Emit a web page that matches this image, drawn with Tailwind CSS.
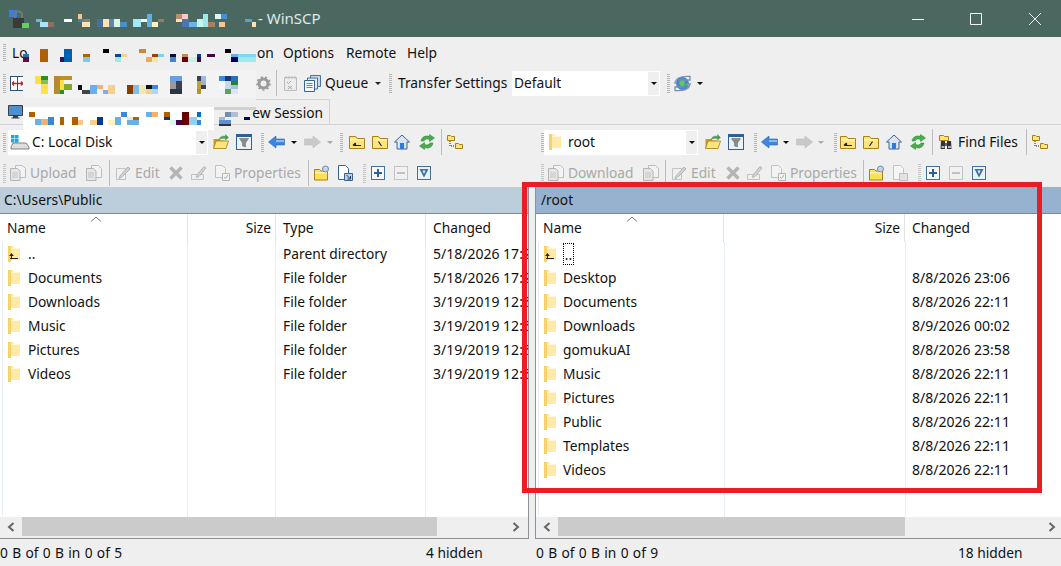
<!DOCTYPE html>
<html lang="en">
<head>
  <meta charset="UTF-8" />
  <title>WinSCP</title>
  <script src="https://cdn.jsdelivr.net/npm/@tailwindcss/browser@4"></script>
</head>
<body class="relative w-[1061px] h-[566px] overflow-hidden bg-[#efefef] text-[#111] text-[13.75px] leading-none font-['Noto_Sans',sans-serif]">

  <!-- shared icons -->
  <svg class="hidden">
    <symbol id="list-folder" viewBox="0 0 12 16">
      <path d="M0 0h5l1 2h6v12H3l-3 2z" fill="#ffeaa8"/>
      <path d="M0 0h3v16H0z" fill="#f7d169"/>
      <path d="M3 2h9v1H3z" fill="#fff6d2"/>
    </symbol>
    <symbol id="up-arrow" viewBox="0 0 12 16">
      <path d="M2 12.500h8M3.500 12.500V9.500" fill="none" stroke="#222"/>
      <path d="M1.200 10L3.500 7 5.800 10z" fill="#222"/>
    </symbol>
    <symbol id="tb-folder" viewBox="0 0 16 16">
      <path d="M.5 2.500h6l1.500 2h7.500v10H.5z" fill="#fde57a" stroke="#a97f1c"/>
      <path d="M1 5h14v1.500H1z" fill="#fff6c0"/>
    </symbol>
    <symbol id="tb-back" viewBox="0 0 17 16">
      <path d="M.5 8L8 2V5h8.500v6H8v3z" fill="#3f87dc" stroke="#2a66b5" stroke-width=".6"/>
      <path d="M8 6h8v2H8z" fill="#8cbcf0"/>
    </symbol>
    <symbol id="tb-forward" viewBox="0 0 17 16">
      <path d="M16.500 8L9 2V5H.5v6H9v3z" fill="#c9c9c9" stroke="#bdbdbd" stroke-width=".6"/>
    </symbol>
    <symbol id="tb-filter" viewBox="0 0 16 16">
      <rect x=".5" y=".5" width="15" height="15" fill="#eaf2fa" stroke="#2f5f97"/>
      <path d="M0 1h16v2H0z" fill="#2f5f97"/>
      <path d="M3.500 4.500h9L9.500 9v4l-3-1V9z" fill="#8a8a8a" stroke="#666" stroke-width=".5"/>
    </symbol>
    <symbol id="tb-open" viewBox="0 0 16 16">
      <path d="M.5 14.500V5h6l1 1.500H12v8z" fill="#c79a24"/>
      <path d="M.5 14.500L3 7h12.500L13 14.500z" fill="#fde57a" stroke="#a97f1c" stroke-width=".8"/>
      <path d="M6 5.500C7 2.500 10 1.500 12.500 2.500V.5l3 3-3 2.500V4.500C10 4 8 4.500 6 5.500z" fill="#3fa648" stroke="#2c7d34" stroke-width=".4"/>
    </symbol>
    <symbol id="tb-home" viewBox="0 0 16 16">
      <path d="M8 1L.5 8H3v7h10V8h2.500z" fill="#d8e4f2" stroke="#3b6796"/>
      <path d="M6 9h4v6H6z" fill="#2f7ad6"/>
    </symbol>
    <symbol id="tb-refresh" viewBox="0 0 16 16">
      <path d="M2 7C2.500 3 6.500 1 10.500 2.500V.5L15.500 4 10.500 7.500V5.500C8 4.500 6 5 5 7z" fill="#45b04a" stroke="#2c7d34" stroke-width=".5"/>
      <path d="M14 9C13.500 13 9.500 15 5.500 13.500v2L.5 12 5.500 8.500v2C8 11.500 10 11 11 9z" fill="#45b04a" stroke="#2c7d34" stroke-width=".5"/>
    </symbol>
    <symbol id="tb-tree" viewBox="0 0 16 16">
      <path d="M.5 1.500h3l1 1h3v4h-7zM8.500 9.500h3l1 1h3v4h-7z" fill="#fde57a" stroke="#a97f1c"/>
      <path d="M3 7v5h5" fill="none" stroke="#222" stroke-dasharray="1 1"/>
    </symbol>
    <symbol id="tb-copy-off" viewBox="0 0 16 16">
      <path d="M5.500 .5h7l3 3v9h-10z" fill="#f3f3f3" stroke="#bdbdbd"/>
      <path d="M.5 3.500h7L10 6v9.500H.5z" fill="#e6e6e6" stroke="#b5b5b5"/>
      <path d="M2 8h6M2 10h6M2 12h6" stroke="#c4c4c4"/>
    </symbol>
    <symbol id="tb-edit-off" viewBox="0 0 16 16">
      <path d="M1.500 3.500h9v11h-9z" fill="#f0f0f0" stroke="#c2c2c2"/>
      <path d="M5 11l-1 2.500L6.500 12.500 15 4 13 2z" fill="#d2d2d2" stroke="#b5b5b5"/>
    </symbol>
    <symbol id="tb-x-off" viewBox="0 0 16 16">
      <path d="M2.500 2.500l11 11M13.500 2.500l-11 11" stroke="#b4b4b4" stroke-width="3.400"/>
    </symbol>
    <symbol id="tb-rename-off" viewBox="0 0 16 16">
      <path d="M.5 9.500h12v5H.5z" fill="#f0f0f0" stroke="#c2c2c2"/>
      <path d="M6 10l-.5 2.500L8 11.500 15 3 13 1.500z" fill="#d2d2d2" stroke="#b5b5b5"/>
    </symbol>
    <symbol id="tb-props-off" viewBox="0 0 16 16">
      <path d="M1.500 .5h7l3 3v9h-10z" fill="#f3f3f3" stroke="#c2c2c2"/>
      <path d="M8.500 8.500h7v7h-7z" fill="#f3f3f3" stroke="#b5b5b5"/>
      <path d="M10 12l1.500 1.500L14 10" fill="none" stroke="#aaa"/>
    </symbol>
    <symbol id="tb-newfolder" viewBox="0 0 16 16">
      <path d="M.5 4.500h5l1.500 1.500h6.500v9H.5z" fill="#fde14f" stroke="#a97f1c"/>
      <path d="M1 7h12v1.500H1z" fill="#fff6c0"/>
      <circle cx="11.500" cy="4" r="3" fill="#c6d4e6" stroke="#6f8bad"/>
    </symbol>
    <symbol id="tb-dup" viewBox="0 0 16 16">
      <path d="M1.500 .5h7l3 3v11h-10z" fill="#fff" stroke="#38618f"/>
      <path d="M7.500 8.500h8v7h-8z" fill="#bcd0e6" stroke="#38618f"/>
      <path d="M9.500 10l4 4M13.500 11v3h-3" fill="none" stroke="#1d3d63"/>
    </symbol>
    <symbol id="tb-dup-off" viewBox="0 0 16 16">
      <path d="M1.500 .5h7l3 3v11h-10z" fill="#f5f5f5" stroke="#c2c2c2"/>
      <path d="M7.500 8.500h8v7h-8z" fill="#e2e2e2" stroke="#bdbdbd"/>
    </symbol>
    <symbol id="tb-plus" viewBox="0 0 14 14">
      <rect x=".5" y=".5" width="13" height="13" fill="#f7f7f7" stroke="#44709f"/>
      <path d="M3 7h8M7 3v8" stroke="#2f5f97" stroke-width="2"/>
    </symbol>
    <symbol id="tb-minus" viewBox="0 0 14 14">
      <rect x=".5" y=".5" width="13" height="13" fill="#f1f1f1" stroke="#c4c4c4"/>
      <path d="M3 7h8" stroke="#c0c0c0" stroke-width="2"/>
    </symbol>
    <symbol id="tb-select" viewBox="0 0 14 14">
      <rect x=".5" y=".5" width="13" height="13" fill="#eaf2fa" stroke="#44709f"/>
      <path d="M2.500 3h9L7 11.500z" fill="#44709f"/>
      <path d="M5.500 4.500h3L7 8z" fill="#eaf2fa"/>
    </symbol>
  </svg>

  <!-- title bar -->
  <header class="flex items-center h-[37px] bg-[#4a685f]">
    <svg class="ml-[8px] w-[21px] h-[20px]" viewBox="0 0 21 20">
      <path d="M1 1h8v7H1z" fill="#3b7fd0"/>
      <path d="M7 9V6a3.500 3.500 0 0 1 7 0v3" fill="none" stroke="#777" stroke-width="2"/>
      <path d="M5 9h11v10H5z" fill="#3a3a3a"/>
      <path d="M14 14h7v5h-7z" fill="#5fd15f"/>
    </svg>
    <span class="ml-[229px] pb-px text-[15px] text-[#dfe9ec]">- WinSCP</span>
    <svg class="ml-auto mr-[19px] w-[130px] h-[14px]" viewBox="0 0 130 14" fill="none" stroke="#f4f6f6">
      <path d="M0 7.500h12"/>
      <path d="M58.500 1.500h11v11h-11z"/>
      <path d="M117 1l12 12M129 1l-12 12"/>
    </svg>
  </header>

  <!-- menu bar -->
  <nav class="flex items-center h-[31px]">
    <div class="ml-[3px] w-[3px] h-[17px] bg-[repeating-linear-gradient(to_bottom,#b5b5b5_0_1px,transparent_1px_2px)]"></div>
    <span class="ml-[6px] w-[245px]">Lo</span>
    <span class="w-[26px]">on</span>
    <span class="w-[63px]">Options</span>
    <span class="w-[61px]">Remote</span>
    <span>Help</span>
  </nav>

  <!-- main toolbar -->
  <div class="flex items-center h-[30px]">
    <div class="ml-[3px] w-[3px] h-[19px] bg-[repeating-linear-gradient(to_bottom,#b5b5b5_0_1px,transparent_1px_2px)]"></div>
    <svg class="ml-[4px] w-[15px] h-[15px]" viewBox="0 0 15 15">
      <rect x=".5" y=".5" width="14" height="14" fill="#fff" stroke="#2b4f7f"/>
      <path d="M7.500 1v13" stroke="#2b4f7f"/>
      <path d="M2 7.500h11M2 7.500l2-2M2 7.500l2 2M13 7.500l-2-2M13 7.500l-2 2" fill="none" stroke="#c0262d" stroke-width="1.300"/>
    </svg>
    <svg class="ml-[231px] w-[15px] h-[15px]" viewBox="0 0 15 15">
      <circle cx="7.500" cy="7.500" r="4.500" fill="none" stroke="#9a9a9a" stroke-width="3"/>
      <circle cx="7.500" cy="7.500" r="6.500" fill="none" stroke="#9a9a9a" stroke-width="1.600" stroke-dasharray="2 2.500"/>
    </svg>
    <div class="ml-[5px] w-px h-[26px] bg-[#bdbdbd]"></div>
    <svg class="ml-[6px] w-[15px] h-[16px]" viewBox="0 0 15 16">
      <path d="M1.500 2.500h12v13h-12z" fill="#ececec" stroke="#bcbcbc"/>
      <path d="M3 1v3M6 1v3M9 1v3M12 1v3" stroke="#bcbcbc"/>
      <path d="M4 7l1.500 1.500L8 6M5 11l4 3M9 11l-4 3" fill="none" stroke="#aaa"/>
    </svg>
    <svg class="ml-[6px] w-[17px] h-[17px]" viewBox="0 0 17 17">
      <path d="M6.500 .5h10v11h-10z" fill="#c8d8ea" stroke="#4d7299"/>
      <path d="M3.500 3h10v11h-10z" fill="#dfe9f4" stroke="#4d7299"/>
      <path d="M.5 5.500h10v11H.5z" fill="#f6f9fc" stroke="#3b6390"/>
      <path d="M2.500 8.500h6M2.500 10.500h6M2.500 12.500h6" stroke="#5c84ad"/>
    </svg>
    <span class="ml-[4px] w-[46px]">Queue</span>
    <span class="ml-[4px] w-0 h-0 border-x-[3px] border-x-transparent border-t-[3px] border-t-[#222]"></span>
    <div class="ml-[8px] w-[3px] h-[19px] bg-[repeating-linear-gradient(to_bottom,#b5b5b5_0_1px,transparent_1px_2px)]"></div>
    <span class="ml-[6px] w-[114px] whitespace-nowrap">Transfer Settings</span>
    <div class="flex items-center w-[148px] h-[25px] bg-white pl-[2px] pr-px">
      <span class="flex-1">Default</span>
      <span class="flex items-center justify-center w-[11px] h-[23px] bg-[#efefef]"><span class="w-0 h-0 border-x-[3px] border-x-transparent border-t-[3px] border-t-[#111]"></span></span>
    </div>
    <div class="ml-[7px] w-[3px] h-[19px] bg-[repeating-linear-gradient(to_bottom,#b5b5b5_0_1px,transparent_1px_2px)]"></div>
    <svg class="ml-[4px] w-[17px] h-[17px]" viewBox="0 0 17 17">
      <circle cx="8.500" cy="8.500" r="6.500" fill="#3f86d8"/>
      <path d="M6 4l4 1 1 4-3 3-3-3zM12 9l2-1-1 4z" fill="#5fc85f"/>
      <path d="M1 9V7.500C2 3 7 1 16 1.500v3.500H6.500L5 7M16 8v1.500C15 14 10 16 1 15.500V12h9.500L12 10" fill="none" stroke="#7c8ea3" stroke-width="1.300"/>
    </svg>
    <span class="ml-[6px] w-0 h-0 border-x-[3px] border-x-transparent border-t-[3px] border-t-[#111]"></span>
  </div>

  <!-- session tabs -->
  <div class="flex items-end h-[27px] border-b border-[#d2d2d2]">
    <svg class="ml-[8px] mb-[5px] w-[15px] h-[15px]" viewBox="0 0 15 15">
      <path d="M.5 1.500h14v10H.5z" fill="#4f8fd0" stroke="#3a3f47"/>
      <path d="M5 12h5v1.500H5zM3.500 13.500h8v1h-8z" fill="#3a3f47"/>
    </svg>
    <div class="flex items-center justify-end ml-[192px] w-[115px] h-[25px] pt-[2px] pr-[6px] border-t border-r border-[#d2d2d2]">ew Session</div>
  </div>

  <!-- the two file panels -->
  <main class="flex h-[441px]">
    <section class="flex flex-col w-[535px]">
      <div class="flex items-center h-[34px]">
        <div class="ml-[3px] w-[3px] h-[19px] bg-[repeating-linear-gradient(to_bottom,#b5b5b5_0_1px,transparent_1px_2px)]"></div>
        <div class="flex items-center ml-[2px] w-[200px] h-[25px] bg-white pr-px">
          <svg class="ml-[2px] w-[20px] h-[15px]" viewBox="0 0 20 15">
            <path d="M1 0h3.500v3.500H1zM5 0h3.500v3.500H5zM1 4h3.500v3.500H1zM5 4h3.500v3.500H5z" fill="#19a8e8"/>
            <path d="M1 12l2-4h13l3 4v2H1z" fill="#dedede" stroke="#555" stroke-width=".7"/>
          </svg>
          <span class="ml-[2px] flex-1">C: Local Disk</span>
          <span class="flex items-center justify-center w-[11px] h-[23px] bg-[#efefef]"><span class="w-0 h-0 border-x-[3px] border-x-transparent border-t-[3px] border-t-[#111]"></span></span>
        </div>
        <svg class="ml-[5px] w-4 h-4"><use href="#tb-open"/></svg>
        <svg class="ml-[7px] w-4 h-4"><use href="#tb-filter"/></svg>
        <div class="ml-[9px] w-[3px] h-[19px] bg-[repeating-linear-gradient(to_bottom,#b5b5b5_0_1px,transparent_1px_2px)]"></div>
        <svg class="ml-[4px] w-[17px] h-4"><use href="#tb-back"/></svg>
        <span class="ml-[6px] w-0 h-0 border-x-[3px] border-x-transparent border-t-[3px] border-t-[#111]"></span>
        <svg class="ml-[7px] w-[17px] h-4"><use href="#tb-forward"/></svg>
        <span class="ml-[6px] w-0 h-0 border-x-[3px] border-x-transparent border-t-[3px] border-t-[#aaa]"></span>
        <div class="ml-[7px] w-[3px] h-[19px] bg-[repeating-linear-gradient(to_bottom,#b5b5b5_0_1px,transparent_1px_2px)]"></div>
        <svg class="ml-[6px] w-4 h-4" viewBox="0 0 16 16"><use href="#tb-folder"/><path d="M4 11.500h8M4 11.500L6.500 9M6.500 9v2.500" fill="none" stroke="#222" stroke-width="1.200"/></svg>
        <svg class="ml-[7px] w-4 h-4" viewBox="0 0 16 16"><use href="#tb-folder"/><path d="M6.500 7.500L9.500 12" stroke="#222" stroke-width="1.200"/></svg>
        <svg class="ml-[6px] w-4 h-4"><use href="#tb-home"/></svg>
        <svg class="ml-[9px] w-4 h-4"><use href="#tb-refresh"/></svg>
        <div class="ml-[6px] w-px h-[26px] bg-[#bdbdbd]"></div>
        <svg class="ml-[5px] w-4 h-4"><use href="#tb-tree"/></svg>
      </div>
      <div class="flex items-center h-[28px] text-[#a9a9a9]">
        <div class="ml-[3px] w-[3px] h-[19px] bg-[repeating-linear-gradient(to_bottom,#c5c5c5_0_1px,transparent_1px_2px)]"></div>
        <svg class="ml-[4px] w-4 h-4"><use href="#tb-copy-off"/></svg>
        <span class="ml-[4px] w-[52px]">Upload</span>
        <svg class="ml-[4px] w-4 h-4"><use href="#tb-copy-off"/></svg>
        <div class="ml-[7px] w-px h-[26px] bg-[#bdbdbd]"></div>
        <svg class="ml-[5px] w-4 h-4"><use href="#tb-edit-off"/></svg>
        <span class="ml-[4px] w-[29px]">Edit</span>
        <svg class="ml-[4px] w-4 h-4"><use href="#tb-x-off"/></svg>
        <svg class="ml-[7px] w-4 h-4"><use href="#tb-rename-off"/></svg>
        <svg class="ml-[7px] w-4 h-4"><use href="#tb-props-off"/></svg>
        <span class="ml-[4px] w-[70px]">Properties</span>
        <div class="ml-[4px] w-px h-[26px] bg-[#bdbdbd]"></div>
        <svg class="ml-[5px] w-4 h-4"><use href="#tb-newfolder"/></svg>
        <svg class="ml-[7px] w-4 h-4"><use href="#tb-dup"/></svg>
        <div class="ml-[10px] w-[3px] h-[19px] bg-[repeating-linear-gradient(to_bottom,#c5c5c5_0_1px,transparent_1px_2px)]"></div>
        <svg class="ml-[5px] w-[14px] h-[14px]"><use href="#tb-plus"/></svg>
        <svg class="ml-[9px] w-[14px] h-[14px]"><use href="#tb-minus"/></svg>
        <svg class="ml-[9px] w-[14px] h-[14px]"><use href="#tb-select"/></svg>
      </div>

      <div class="flex flex-col w-[529px] flex-1 border-r border-b border-[#8e9297] bg-white">
        <div class="flex items-center h-[27px] pl-[4px] bg-[#bccddc] border-b border-[#808890]">C:\Users\Public</div>
        <div class="relative grid grid-cols-[188px_88px_150px_102px] h-[28px] items-center bg-white">
          <span class="pl-[7px] h-full flex items-center border-r border-[#e4e4e4]">Name</span>
          <span class="pr-[4px] h-full flex items-center justify-end border-r border-[#e4e4e4]">Size</span>
          <span class="pl-[7px] h-full flex items-center border-r border-[#e4e4e4]">Type</span>
          <span class="pl-[7px] h-full flex items-center">Changed</span>
          <svg class="absolute left-[90px] top-[2px] w-[12px] h-[6px]" viewBox="0 0 12 6" fill="none" stroke="#777"><path d="M1 5.500L6 1l5 4.500"/></svg>
        </div>
        <div class="flex-1 overflow-hidden bg-[linear-gradient(#e6eff9,#e6eff9),linear-gradient(#e6eff9,#e6eff9),linear-gradient(#e6eff9,#e6eff9),linear-gradient(#e6eff9,#e6eff9)] bg-[length:1px_100%] bg-[position:2px_0,187px_0,275px_0,425px_0] bg-no-repeat">
          <div class="grid grid-cols-[28px_160px_88px_150px_102px] grid-rows-[repeat(6,24px)] items-center whitespace-nowrap">
            <svg class="ml-[8px] w-3 h-4" viewBox="0 0 12 16"><use href="#list-folder"/><use href="#up-arrow"/></svg><span>..</span><span></span><span class="pl-[7px]">Parent directory</span><span class="pl-[7px] text-[14px] overflow-hidden">5/18/2026 17:23</span>
            <svg class="ml-[8px] w-3 h-4"><use href="#list-folder"/></svg><span>Documents</span><span></span><span class="pl-[7px]">File folder</span><span class="pl-[7px] text-[14px] overflow-hidden">5/18/2026 17:23</span>
            <svg class="ml-[8px] w-3 h-4"><use href="#list-folder"/></svg><span>Downloads</span><span></span><span class="pl-[7px]">File folder</span><span class="pl-[7px] text-[14px] overflow-hidden">3/19/2019 12:52</span>
            <svg class="ml-[8px] w-3 h-4"><use href="#list-folder"/></svg><span>Music</span><span></span><span class="pl-[7px]">File folder</span><span class="pl-[7px] text-[14px] overflow-hidden">3/19/2019 12:52</span>
            <svg class="ml-[8px] w-3 h-4"><use href="#list-folder"/></svg><span>Pictures</span><span></span><span class="pl-[7px]">File folder</span><span class="pl-[7px] text-[14px] overflow-hidden">3/19/2019 12:52</span>
            <svg class="ml-[8px] w-3 h-4"><use href="#list-folder"/></svg><span>Videos</span><span></span><span class="pl-[7px]">File folder</span><span class="pl-[7px] text-[14px] overflow-hidden">3/19/2019 12:52</span>
          </div>
        </div>
        <div class="flex items-start h-[21px] bg-[#efefef]">
          <svg class="ml-[7px] mt-[5px] w-[8px] h-[10px]" viewBox="0 0 8 10" fill="none" stroke="#666" stroke-width="2"><path d="M6.500 1L2 5l4.500 4"/></svg>
          <div class="ml-[7px] w-[415px] h-[19px] bg-[#cbcbcb]"></div>
          <svg class="ml-[75px] mt-[5px] w-[8px] h-[10px]" viewBox="0 0 8 10" fill="none" stroke="#666" stroke-width="2"><path d="M1.500 1L6 5 1.500 9"/></svg>
        </div>
      </div>
      <div class="flex items-center h-[27px] pt-px">
        <span class="w-[426px] [word-spacing:0.75px]">0 B of 0 B in 0 of 5</span>
        <span>4 hidden</span>
      </div>
    </section>

    <section class="flex flex-col flex-1">
      <div class="flex items-center h-[34px]">
        <div class="ml-[6px] w-[3px] h-[19px] bg-[repeating-linear-gradient(to_bottom,#b5b5b5_0_1px,transparent_1px_2px)]"></div>
        <div class="flex items-center w-[154px] h-[25px] bg-white pr-px">
          <svg class="ml-[5px] w-3 h-4"><use href="#list-folder"/></svg>
          <span class="ml-[7px] flex-1">root</span>
          <span class="flex items-center justify-center w-[11px] h-[23px] bg-[#efefef]"><span class="w-0 h-0 border-x-[3px] border-x-transparent border-t-[3px] border-t-[#111]"></span></span>
        </div>
        <svg class="ml-[7px] w-4 h-4"><use href="#tb-open"/></svg>
        <svg class="ml-[7px] w-4 h-4"><use href="#tb-filter"/></svg>
        <div class="ml-[10px] w-[3px] h-[19px] bg-[repeating-linear-gradient(to_bottom,#b5b5b5_0_1px,transparent_1px_2px)]"></div>
        <svg class="ml-[4px] w-[17px] h-4"><use href="#tb-back"/></svg>
        <span class="ml-[5px] w-0 h-0 border-x-[3px] border-x-transparent border-t-[3px] border-t-[#111]"></span>
        <svg class="ml-[7px] w-[17px] h-4"><use href="#tb-forward"/></svg>
        <span class="ml-[5px] w-0 h-0 border-x-[3px] border-x-transparent border-t-[3px] border-t-[#aaa]"></span>
        <div class="ml-[10px] w-[3px] h-[19px] bg-[repeating-linear-gradient(to_bottom,#b5b5b5_0_1px,transparent_1px_2px)]"></div>
        <svg class="ml-[3px] w-4 h-4" viewBox="0 0 16 16"><use href="#tb-folder"/><path d="M4 11.500h8M4 11.500L6.500 9M6.500 9v2.500" fill="none" stroke="#222" stroke-width="1.200"/></svg>
        <svg class="ml-[7px] w-4 h-4" viewBox="0 0 16 16"><use href="#tb-folder"/><path d="M9.500 7.500L6.500 12" stroke="#222" stroke-width="1.200"/></svg>
        <svg class="ml-[7px] w-4 h-4"><use href="#tb-home"/></svg>
        <svg class="ml-[8px] w-4 h-4"><use href="#tb-refresh"/></svg>
        <div class="ml-[6px] w-px h-[26px] bg-[#bdbdbd]"></div>
        <svg class="ml-[5px] w-4 h-4" viewBox="0 0 16 16">
          <path d="M1.500 1.500h4l1 1h4v4h-9z" fill="#fde57a" stroke="#a97f1c"/>
          <path d="M3 7h4v8H2.500zM9 7h4l.5 8H9z" fill="#333"/>
          <path d="M7 9h2v3H7z" fill="#666"/>
          <path d="M3.500 12h3v2h-3zM10 12h3v2h-3z" fill="#aab4c0"/>
        </svg>
        <span class="ml-[4px] w-[64px] whitespace-nowrap">Find Files</span>
        <div class="ml-[4px] w-px h-[26px] bg-[#bdbdbd]"></div>
        <svg class="ml-[5px] w-4 h-4"><use href="#tb-tree"/></svg>
      </div>
      <div class="flex items-center h-[28px] text-[#a9a9a9]">
        <div class="ml-[6px] w-[3px] h-[19px] bg-[repeating-linear-gradient(to_bottom,#c5c5c5_0_1px,transparent_1px_2px)]"></div>
        <svg class="ml-[4px] w-4 h-4"><use href="#tb-copy-off"/></svg>
        <span class="ml-[4px] w-[71px]">Download</span>
        <svg class="ml-[4px] w-4 h-4"><use href="#tb-copy-off"/></svg>
        <div class="ml-[6px] w-px h-[26px] bg-[#bdbdbd]"></div>
        <svg class="ml-[5px] w-4 h-4"><use href="#tb-edit-off"/></svg>
        <span class="ml-[4px] w-[29px]">Edit</span>
        <svg class="ml-[5px] w-4 h-4"><use href="#tb-x-off"/></svg>
        <svg class="ml-[6px] w-4 h-4"><use href="#tb-rename-off"/></svg>
        <svg class="ml-[7px] w-4 h-4"><use href="#tb-props-off"/></svg>
        <span class="ml-[4px] w-[70px]">Properties</span>
        <div class="ml-[3px] w-px h-[26px] bg-[#bdbdbd]"></div>
        <svg class="ml-[5px] w-4 h-4"><use href="#tb-newfolder"/></svg>
        <svg class="ml-[7px] w-4 h-4"><use href="#tb-dup-off"/></svg>
        <div class="ml-[10px] w-[3px] h-[19px] bg-[repeating-linear-gradient(to_bottom,#c5c5c5_0_1px,transparent_1px_2px)]"></div>
        <svg class="ml-[5px] w-[14px] h-[14px]"><use href="#tb-plus"/></svg>
        <svg class="ml-[9px] w-[14px] h-[14px]"><use href="#tb-minus"/></svg>
        <svg class="ml-[9px] w-[14px] h-[14px]"><use href="#tb-select"/></svg>
      </div>

      <div class="flex flex-col flex-1 border-l border-b border-[#8e9297] bg-white">
        <div class="flex items-center h-[27px] pl-[5px] bg-[#97b2cf] border-b border-[#808890]">/root</div>
        <div class="relative grid grid-cols-[188px_181px_1fr] h-[28px] items-center bg-white">
          <span class="pl-[7px] h-full flex items-center border-r border-[#e4e4e4]">Name</span>
          <span class="pr-[4px] h-full flex items-center justify-end border-r border-[#e4e4e4]">Size</span>
          <span class="pl-[7px] h-full flex items-center">Changed</span>
          <svg class="absolute left-[90px] top-[2px] w-[12px] h-[6px]" viewBox="0 0 12 6" fill="none" stroke="#777"><path d="M1 5.500L6 1l5 4.500"/></svg>
        </div>
        <div class="flex-1 overflow-hidden bg-[linear-gradient(#e6eff9,#e6eff9),linear-gradient(#e6eff9,#e6eff9),linear-gradient(#e6eff9,#e6eff9)] bg-[length:1px_100%] bg-[position:2px_0,188px_0,369px_0] bg-no-repeat">
          <div class="grid grid-cols-[27px_161px_181px_1fr] grid-rows-[repeat(10,24px)] items-center whitespace-nowrap">
            <svg class="ml-[8px] w-3 h-4" viewBox="0 0 12 16"><use href="#list-folder"/><use href="#up-arrow"/></svg><span class="w-[11px] h-[22px] pb-[2px] flex items-end justify-center border border-dotted border-black">..</span><span></span><span></span>
            <svg class="ml-[8px] w-3 h-4"><use href="#list-folder"/></svg><span>Desktop</span><span></span><span class="pl-[7px] text-[14px]">8/8/2026 23:06</span>
            <svg class="ml-[8px] w-3 h-4"><use href="#list-folder"/></svg><span>Documents</span><span></span><span class="pl-[7px] text-[14px]">8/8/2026 22:11</span>
            <svg class="ml-[8px] w-3 h-4"><use href="#list-folder"/></svg><span>Downloads</span><span></span><span class="pl-[7px] text-[14px]">8/9/2026 00:02</span>
            <svg class="ml-[8px] w-3 h-4"><use href="#list-folder"/></svg><span>gomukuAI</span><span></span><span class="pl-[7px] text-[14px]">8/8/2026 23:58</span>
            <svg class="ml-[8px] w-3 h-4"><use href="#list-folder"/></svg><span>Music</span><span></span><span class="pl-[7px] text-[14px]">8/8/2026 22:11</span>
            <svg class="ml-[8px] w-3 h-4"><use href="#list-folder"/></svg><span>Pictures</span><span></span><span class="pl-[7px] text-[14px]">8/8/2026 22:11</span>
            <svg class="ml-[8px] w-3 h-4"><use href="#list-folder"/></svg><span>Public</span><span></span><span class="pl-[7px] text-[14px]">8/8/2026 22:11</span>
            <svg class="ml-[8px] w-3 h-4"><use href="#list-folder"/></svg><span>Templates</span><span></span><span class="pl-[7px] text-[14px]">8/8/2026 22:11</span>
            <svg class="ml-[8px] w-3 h-4"><use href="#list-folder"/></svg><span>Videos</span><span></span><span class="pl-[7px] text-[14px]">8/8/2026 22:11</span>
          </div>
        </div>
        <div class="flex items-start h-[21px] bg-[#efefef]">
          <svg class="ml-[7px] mt-[5px] w-[8px] h-[10px]" viewBox="0 0 8 10" fill="none" stroke="#666" stroke-width="2"><path d="M6.500 1L2 5l4.500 4"/></svg>
          <div class="ml-[7px] w-[347px] h-[19px] bg-[#cbcbcb]"></div>
          <svg class="ml-[143px] mt-[5px] w-[8px] h-[10px]" viewBox="0 0 8 10" fill="none" stroke="#666" stroke-width="2"><path d="M1.500 1L6 5 1.500 9"/></svg>
        </div>
      </div>
      <div class="flex items-center h-[27px] pt-px">
        <span class="ml-px w-[422px] [word-spacing:0.75px]">0 B of 0 B in 0 of 9</span>
        <span>18 hidden</span>
      </div>
    </section>
  </main>

  <!-- pixelated patches over the title, menu, toolbar and tab -->
  <svg class="absolute left-0 top-0 w-[1061px] h-[140px] pointer-events-none" viewBox="0 0 1061 140" shape-rendering="crispEdges">
    <g>
      <rect x="36" y="19" width="6" height="3" fill="#6eb5e0"/><rect x="40" y="22" width="8" height="5" fill="#a8e4f5"/><rect x="48" y="22" width="6" height="5" fill="#8f6f62"/>
      <rect x="64" y="19" width="8" height="3" fill="#fff"/>
      <rect x="78" y="14" width="4" height="5" fill="#f0c890"/><rect x="78" y="19" width="5" height="3" fill="#4a7fb0"/><rect x="83" y="19" width="7" height="3" fill="#a07a60"/><rect x="82" y="22" width="8" height="5" fill="#fde3b8"/>
      <rect x="97" y="19" width="6" height="8" fill="#4a6f9f"/><rect x="103" y="19" width="6" height="8" fill="#fde3b0"/><rect x="109" y="19" width="5" height="8" fill="#5f86ad"/><rect x="114" y="19" width="6" height="8" fill="#d8f5e5"/><rect x="120" y="22" width="7" height="5" fill="#4a90c8"/>
      <rect x="133" y="19" width="8" height="8" fill="#a0e8f5"/><rect x="141" y="19" width="6" height="3" fill="#fff"/><rect x="147" y="14" width="5" height="13" fill="#60b0e0"/><rect x="152" y="22" width="6" height="5" fill="#fdf3c0"/><rect x="158" y="19" width="6" height="3" fill="#9a7a60"/>
      <rect x="176" y="14" width="6" height="5" fill="#b89070"/><rect x="182" y="14" width="6" height="5" fill="#fcc8c8"/><rect x="176" y="19" width="6" height="3" fill="#fde3b0"/><rect x="182" y="19" width="7" height="8" fill="#4a76ad"/><rect x="189" y="22" width="8" height="5" fill="#68b6e6"/>
      <rect x="197" y="19" width="6" height="8" fill="#c4f5ee"/><rect x="203" y="14" width="5" height="13" fill="#9ae8f0"/><rect x="208" y="22" width="7" height="5" fill="#a88060"/><rect x="215" y="14" width="6" height="5" fill="#d8f5f0"/><rect x="221" y="14" width="6" height="5" fill="#4a90d0"/><rect x="219" y="22" width="6" height="5" fill="#f5c890"/>
      <rect x="245" y="19" width="7" height="3" fill="#5f9fd0"/><rect x="252" y="22" width="4" height="5" fill="#fde3b0"/>
    </g>
    <g>
      <rect x="23" y="54" width="6" height="3" fill="#2a6ea8"/><rect x="23" y="57" width="6" height="5" fill="#5a0f3c"/>
      <rect x="40" y="49" width="8" height="13" fill="#b06000"/>
      <rect x="60" y="57" width="4" height="5" fill="#3a1060"/><rect x="64" y="49" width="8" height="13" fill="#0060b0"/>
      <rect x="83" y="54" width="7" height="3" fill="#b06000"/><rect x="83" y="57" width="7" height="5" fill="#80c8e8"/>
      <rect x="103" y="49" width="6" height="4" fill="#000"/>
      <rect x="115" y="54" width="6" height="3" fill="#0a4a90"/><rect x="115" y="57" width="6" height="5" fill="#a0e8e8"/><rect x="121" y="54" width="6" height="3" fill="#f5d090"/>
      <rect x="139" y="49" width="7" height="4" fill="#c88838"/><rect x="146" y="57" width="6" height="5" fill="#f0a860"/><rect x="152" y="54" width="6" height="3" fill="#a04000"/><rect x="152" y="57" width="6" height="5" fill="#f0e8a8"/><rect x="158" y="54" width="6" height="3" fill="#80d0f0"/>
      <rect x="170" y="54" width="6" height="3" fill="#100840"/><rect x="170" y="57" width="6" height="5" fill="#3a88d0"/><rect x="182" y="54" width="6" height="3" fill="#c08860"/><rect x="182" y="57" width="6" height="5" fill="#6a0000"/><rect x="188" y="57" width="9" height="5" fill="#c8f0e8"/><rect x="197" y="54" width="4" height="3" fill="#0a3a8a"/><rect x="197" y="57" width="4" height="5" fill="#400840"/>
      <rect x="207" y="54" width="8" height="3" fill="#400840"/><rect x="225" y="49" width="6" height="4" fill="#000"/><rect x="231" y="54" width="7" height="3" fill="#6ab0e0"/><rect x="231" y="57" width="7" height="5" fill="#000060"/><rect x="238" y="54" width="18" height="3" fill="#80d8f0"/><rect x="238" y="57" width="18" height="5" fill="#a0e8f0"/>
    </g>
    <g>
      <rect x="23" y="70" width="233" height="28" fill="#f3f3f3"/>
      <rect x="35" y="76" width="6" height="8" fill="#ffe040"/><rect x="41" y="76" width="7" height="4" fill="#2a9020"/><rect x="41" y="80" width="7" height="4" fill="#80c060"/><rect x="41" y="84" width="7" height="10" fill="#ffe050"/>
      <rect x="54" y="76" width="6" height="18" fill="#b88a30"/><rect x="60" y="76" width="12" height="4" fill="#c09020"/><rect x="60" y="80" width="4" height="14" fill="#ffe040"/><rect x="64" y="84" width="8" height="6" fill="#80a830"/><rect x="60" y="90" width="4" height="4" fill="#2a9020"/>
      <rect x="78" y="85" width="4" height="5" fill="#111"/><rect x="82" y="90" width="8" height="4" fill="#444"/><rect x="90" y="85" width="7" height="9" fill="#68aef0"/><rect x="97" y="85" width="6" height="4" fill="#f5b070"/><rect x="103" y="90" width="5" height="4" fill="#8aa8e8"/><rect x="108" y="85" width="7" height="9" fill="#f5d090"/>
      <rect x="127" y="85" width="6" height="9" fill="#8a3c00"/><rect x="133" y="85" width="6" height="9" fill="#80c0e8"/><rect x="139" y="85" width="7" height="9" fill="#f0e8b0"/><rect x="146" y="85" width="6" height="4" fill="#111"/><rect x="146" y="89" width="6" height="5" fill="#f5d090"/><rect x="152" y="85" width="6" height="4" fill="#3a88e0"/><rect x="152" y="89" width="6" height="5" fill="#b0d8f0"/>
      <rect x="170" y="76" width="12" height="5" fill="#68a0e8"/><rect x="170" y="81" width="6" height="8" fill="#9a9a9a"/><rect x="176" y="81" width="6" height="8" fill="#3a4250"/><rect x="170" y="89" width="12" height="5" fill="#2c3440"/>
      <rect x="197" y="76" width="4" height="5" fill="#3a4250"/><rect x="201" y="76" width="5" height="5" fill="#9ab8e8"/><rect x="197" y="81" width="4" height="8" fill="#c0a030"/><rect x="201" y="81" width="5" height="4" fill="#a8b0c0"/><rect x="201" y="85" width="5" height="4" fill="#3a4250"/><rect x="197" y="89" width="4" height="5" fill="#b89030"/>
      <rect x="219" y="76" width="6" height="5" fill="#3a88e0"/><rect x="225" y="76" width="6" height="5" fill="#1a3a70"/><rect x="231" y="76" width="7" height="5" fill="#2a70c0"/><rect x="219" y="81" width="6" height="8" fill="#f5f8fc"/><rect x="225" y="81" width="6" height="8" fill="#c8d8e8"/><rect x="231" y="81" width="7" height="4" fill="#2a8030"/><rect x="231" y="85" width="7" height="4" fill="#a8c0d8"/><rect x="219" y="89" width="6" height="5" fill="#f0f4f8"/><rect x="225" y="89" width="6" height="5" fill="#5aa060"/><rect x="231" y="89" width="7" height="5" fill="#d8e8f5"/>
    </g>
    <g>
      <rect x="23" y="98" width="233" height="9" fill="#efefef"/>
      <rect x="23" y="107" width="191" height="23" fill="#fff"/>
      <rect x="214" y="107" width="42" height="3" fill="#d0d0d0"/>
      <rect x="29" y="112" width="6" height="5" fill="#b06000"/><rect x="35" y="119" width="6" height="6" fill="#68b0e8"/><rect x="41" y="119" width="7" height="6" fill="#f5b070"/><rect x="48" y="117" width="6" height="8" fill="#3a88d0"/>
      <rect x="60" y="117" width="4" height="8" fill="#b06000"/><rect x="72" y="117" width="6" height="8" fill="#b06000"/><rect x="78" y="120" width="5" height="5" fill="#f0c890"/>
      <rect x="90" y="120" width="7" height="5" fill="#f5d090"/><rect x="97" y="117" width="6" height="8" fill="#003a90"/><rect x="108" y="120" width="7" height="5" fill="#fdf3c0"/>
      <rect x="115" y="117" width="6" height="8" fill="#68b0e8"/><rect x="121" y="112" width="6" height="5" fill="#3a88e0"/><rect x="127" y="117" width="6" height="3" fill="#fde3b0"/><rect x="133" y="117" width="6" height="3" fill="#b06000"/><rect x="127" y="120" width="12" height="5" fill="#68b0e8"/>
      <rect x="146" y="112" width="6" height="5" fill="#68b0e8"/><rect x="152" y="112" width="6" height="5" fill="#f5b070"/>
      <rect x="164" y="112" width="6" height="5" fill="#b06000"/><rect x="164" y="117" width="6" height="3" fill="#003a90"/><rect x="170" y="120" width="6" height="5" fill="#d8f5f0"/>
      <rect x="176" y="120" width="6" height="5" fill="#400840"/><rect x="182" y="112" width="7" height="13" fill="#6a0000"/><rect x="189" y="117" width="8" height="8" fill="#90d0f0"/><rect x="197" y="112" width="4" height="5" fill="#0070c0"/><rect x="197" y="120" width="4" height="5" fill="#3a88d0"/>
      <rect x="219" y="117" width="6" height="8" fill="#a8b8d0"/><rect x="225" y="112" width="6" height="5" fill="#7090b0"/><rect x="231" y="112" width="7" height="5" fill="#b0c0d0"/><rect x="219" y="120" width="12" height="4" fill="#5a90d8"/><rect x="219" y="124" width="12" height="2" fill="#2c3440"/><rect x="244" y="117" width="6" height="3" fill="#000060"/>
    </g>
  </svg>

  <!-- red annotation box around the remote list -->
  <div class="absolute left-[522px] top-[182px] w-[520px] h-[311px] border-[5px] border-[#ed1c24]"></div>

</body>
</html>
